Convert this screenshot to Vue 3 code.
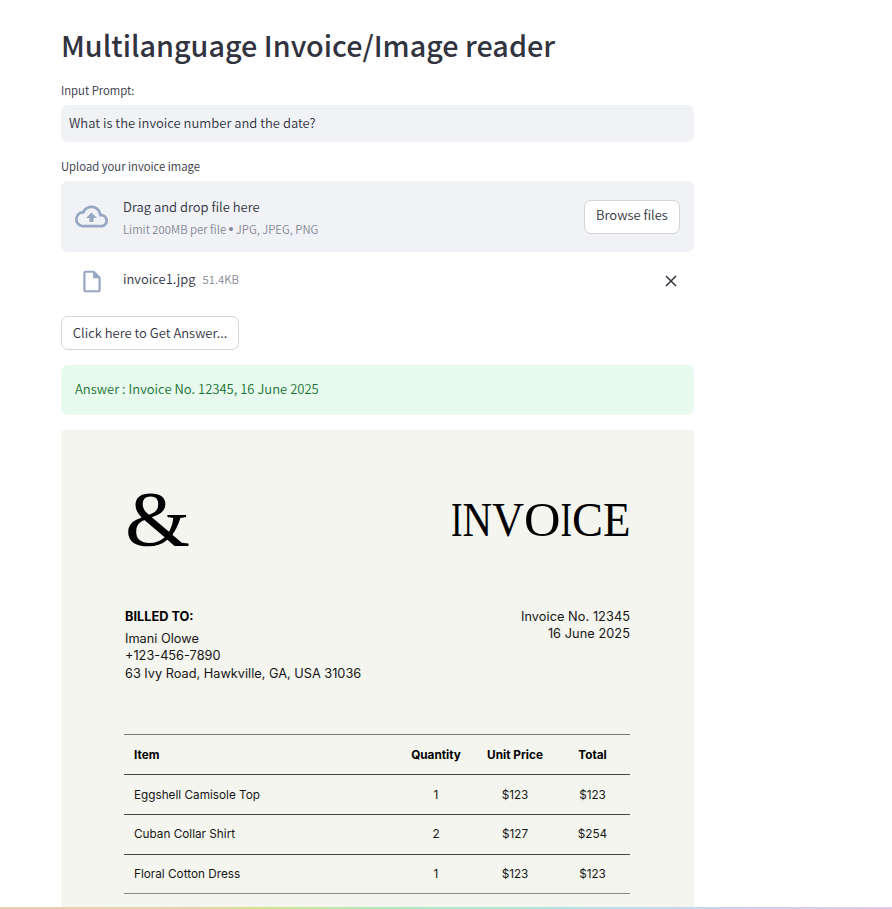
<script setup>
const heading = [
  { char: 'I', x: 1, width: 11.5 },
  { char: 'N', x: 12.5, width: 29.5 },
  { char: 'V', x: 42, width: 32 },
  { char: 'O', x: 74, width: 36.5 },
  { char: 'I', x: 110.5, width: 11.5 },
  { char: 'C', x: 122, width: 31 },
  { char: 'E', x: 153, width: 27.5 },
]

const items = [
  { name: 'Eggshell Camisole Top', qty: '1', price: '$123', total: '$123' },
  { name: 'Cuban Collar Shirt', qty: '2', price: '$127', total: '$254' },
  { name: 'Floral Cotton Dress', qty: '1', price: '$123', total: '$123' },
]
</script>

<template>
  <div class="page">
    <main class="column">
      <h1 class="title">Multilanguage Invoice/Image reader</h1>

      <label class="label">Input Prompt:</label>
      <div class="field">What is the invoice number and the date?</div>

      <label class="label upload-label">Upload your invoice image</label>
      <section class="dropzone">
        <svg class="cloud" viewBox="0 0 24 24" fill="currentColor">
          <path d="M19.35 10.04A7.49 7.49 0 0 0 12 4C9.11 4 6.6 5.64 5.35 8.04A5.994 5.994 0 0 0 0 14c0 3.31 2.69 6 6 6h13c2.76 0 5-2.24 5-5 0-2.64-2.05-4.78-4.65-4.96zM19 18H6c-2.21 0-4-1.79-4-4 0-2.05 1.53-3.76 3.56-3.97l1.07-.11.5-.95A5.469 5.469 0 0 1 12 6c2.62 0 4.88 1.86 5.39 4.43l.3 1.5 1.53.11A2.98 2.98 0 0 1 22 15c0 1.65-1.35 3-3 3zM8 13h2.55v3h2.9v-3H16l-4-4z" />
        </svg>
        <div class="drop-text">
          <span class="drop-main">Drag and drop file here</span>
          <span class="drop-sub">Limit 200MB per file <span class="bullet">•</span> JPG, JPEG, PNG</span>
        </div>
        <button class="button">Browse files</button>
      </section>

      <div class="file">
        <svg class="file-icon" viewBox="0 0 24 24" fill="currentColor">
          <path d="M14 2H6c-1.1 0-1.99.9-1.99 2L4 20c0 1.1.89 2 1.99 2H18c1.1 0 2-.9 2-2V8l-6-6zM6 20V4h7v5h5v11H6z" />
        </svg>
        <span class="file-name">invoice1.jpg</span>
        <span class="file-size">51.4KB</span>
        <svg class="close" viewBox="0 0 12 12">
          <path d="M1 1l10 10M11 1L1 11" fill="none" stroke="currentColor" stroke-width="1.5" />
        </svg>
      </div>

      <button class="button answer-button">Click here to Get Answer...</button>
      <div class="alert">Answer : Invoice No. 12345, 16 June 2025</div>

      <article class="invoice">
        <header class="invoice-head">
          <svg class="mark" viewBox="0 0 66 60">
            <text x="1" y="55" textLength="65" lengthAdjust="spacingAndGlyphs">&amp;</text>
          </svg>
          <svg class="heading" viewBox="0 0 180 60">
            <text
              v-for="(glyph, i) in heading"
              :key="i"
              :x="glyph.x"
              y="46"
              :textLength="glyph.width"
              lengthAdjust="spacingAndGlyphs"
            >{{ glyph.char }}</text>
          </svg>
        </header>

        <div class="parties">
          <div class="billed">
            <strong>BILLED TO:</strong>
            <span>Imani Olowe</span>
            <span>+123-456-7890</span>
            <span>63 Ivy Road, Hawkville, GA, USA 31036</span>
          </div>
          <div class="meta">
            <span>Invoice No. 12345</span>
            <span>16 June 2025</span>
          </div>
        </div>

        <div class="table">
          <div class="row head">
            <span>Item</span><span>Quantity</span><span>Unit Price</span><span>Total</span>
          </div>
          <div v-for="item in items" :key="item.name" class="row">
            <span>{{ item.name }}</span><span>{{ item.qty }}</span><span>{{ item.price }}</span><span>{{ item.total }}</span>
          </div>
        </div>
      </article>
    </main>
    <div class="ribbon"></div>
  </div>
</template>

<style>
body {
  background: #fff;
  overflow: hidden;
}
</style>

<style scoped>
.page {
  box-sizing: border-box;
  height: 909px;
  overflow: hidden;
  display: flex;
  flex-direction: column;
  color: #31333f;
  font-family: "Noto Sans CJK SC", "Noto Sans", sans-serif;
  font-size: 13px;
  font-weight: 350;
}
.column {
  flex: 1;
  min-height: 0;
  overflow: hidden;
  width: 633px;
  margin-left: 61px;
  display: flex;
  flex-direction: column;
}
.column > * {
  flex-shrink: 0;
}
.title {
  margin: 25px 0 0;
  height: 41px;
  line-height: 40px;
  font-size: 28.75px;
  font-weight: 500;
  white-space: nowrap;
}
.label {
  margin-top: 14px;
  height: 20px;
  line-height: 20px;
  font-size: 11.35px;
  margin-bottom: 5px;
}
.field {
  box-sizing: border-box;
  height: 37px;
  line-height: 36px;
  padding: 0 8px;
  border-radius: 7px;
  background: #f0f2f6;
}
.upload-label {
  margin-top: 14px;
}
.dropzone {
  box-sizing: border-box;
  height: 71px;
  padding: 0 14px;
  border-radius: 7px;
  background: #f0f2f6;
  display: flex;
  align-items: center;
}
.cloud {
  width: 33px;
  height: 33px;
  margin-right: 15px;
  color: #97a6c3;
}
.drop-text {
  flex: 1;
  display: flex;
  flex-direction: column;
  padding-top: 2px;
}
.drop-main {
  line-height: 22px;
}
.drop-sub {
  height: 22px;
  line-height: 22px;
  font-size: 11.35px;
  color: #858894;
}
.bullet {
  margin: 0 -0.2px;
  font-family: "Liberation Sans", sans-serif;
  font-size: 14px;
  line-height: 1;
}
.button {
  box-sizing: border-box;
  height: 34px;
  width: 96px;
  padding: 0;
  border: 1px solid #d6d6d9;
  border-radius: 7px;
  background: #fff;
  color: inherit;
  font: inherit;
  line-height: 30px;
}
.dropzone .button {
  line-height: 28px;
  padding-bottom: 3px;
}
.file {
  height: 58px;
  padding: 0 17px 0 18px;
  display: flex;
  align-items: center;
}
.file-icon {
  width: 26px;
  height: 27px;
  margin-right: 18px;
  color: #97a6c3;
}
.file-name {
  line-height: 24px;
  margin-top: -4px;
}
.file-size {
  flex: 1;
  margin: -4px 0 0 7px;
  font-size: 11.35px;
  color: #858894;
}
.close {
  width: 12px;
  height: 12px;
}
.answer-button {
  width: 178px;
  margin-top: 6px;
}
.alert {
  margin-top: 15px;
  height: 50px;
  line-height: 48px;
  padding: 0 14px;
  border-radius: 7px;
  background: #e8f9ee;
  color: #177233;
  letter-spacing: 0.02px;
}
.invoice {
  box-sizing: border-box;
  height: 620px;
  margin-top: 15px;
  padding: 60px 64px 0 63px;
  background: #f4f5ee;
  color: #161616;
  font-family: Inter, sans-serif;
  font-weight: 400;
}
.invoice-head {
  display: flex;
  justify-content: space-between;
  height: 60px;
}
.mark {
  width: 66px;
  height: 60px;
  overflow: visible;
  font: 78px "Liberation Serif", serif;
  fill: #000;
}
.heading {
  width: 180px;
  height: 60px;
  overflow: visible;
  font: 49px "Liberation Serif", serif;
  fill: #000;
}
.parties {
  display: flex;
  justify-content: space-between;
  padding: 58px 0 0 1px;
  height: 126px;
  font-size: 12.75px;
  line-height: 17.5px;
}
.billed,
.meta {
  display: flex;
  flex-direction: column;
}
.billed strong {
  font-weight: 700;
  margin-bottom: 4px;
  color: #000;
}
.meta {
  align-items: flex-end;
}
.meta {
  line-height: 17.2px;
}
.meta span {
  letter-spacing: 0.06px;
}
.table {
  border-top: 1px solid #777872;
}
.row {
  box-sizing: border-box;
  height: 39.85px;
  padding-top: 0.6px;
  border-bottom: 1px solid #454542;
  display: grid;
  grid-template-columns: 272px 80px 78px 76px;
  align-items: center;
  font-size: 11.75px;
  text-align: center;
}
.row span:first-child {
  text-align: left;
  padding-left: 10px;
}
.row span:last-child {
  padding-left: 1px;
}
.row:last-child {
  border-color: #8c8d87;
}
.head {
  padding-top: 1px;
  font-weight: 700;
  color: #000;
}
.ribbon {
  height: 2px;
  background: linear-gradient(90deg, #efd0b5 0%, #e5d1a8 22%, #d2e58c 29%, #b0e8b8 42%, #b0e6d8 58%, #bddfed 70%, #cfcfee 85%, #e4cde8 100%);
}
</style>
